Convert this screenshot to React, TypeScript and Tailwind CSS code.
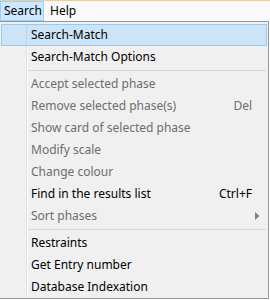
import { ReactNode } from "react";

interface MenuEntry {
    label: string;
    shortcut?: string;
    disabled?: boolean;
    submenu?: boolean;
    active?: boolean;
}

const topGroup: MenuEntry[] = [
    { label: "Search-Match", active: true },
    { label: "Search-Match Options" },
];

const middleGroup: MenuEntry[] = [
    { label: "Accept selected phase", disabled: true },
    { label: "Remove selected phase(s)", shortcut: "Del", disabled: true },
    { label: "Show card of selected phase", disabled: true },
    { label: "Modify scale", disabled: true },
    { label: "Change colour", disabled: true },
    { label: "Find in the results list", shortcut: "Ctrl+F" },
    { label: "Sort phases", disabled: true, submenu: true },
];

const bottomGroup: MenuEntry[] = [
    { label: "Restraints" },
    { label: "Get Entry number" },
    { label: "Database Indexation" },
];

function MenuRow({ entry }: { entry: MenuEntry }) {
    const base = "mx-[1px] h-[22px] flex items-center pl-[29px] pr-[14px] border";
    const look = entry.active
        ? "border-[#99c9f2] bg-[linear-gradient(to_right,#cde4f7_24px,#b8d4ec_24px,#b8d4ec_25px,#cde4f7_25px)]"
        : "border-transparent";
    return (
        <div className={`${base} ${look}`}>
            <span className={`flex-1 whitespace-nowrap ${entry.disabled ? "text-[#6d6d6d]" : "text-black"}`}>
                {entry.label}
            </span>
            {entry.shortcut && (
                <span className={entry.disabled ? "text-[#6d6d6d]" : "text-black"}>{entry.shortcut}</span>
            )}
            {entry.submenu && (
                <svg width="5" height="8" viewBox="0 0 5 8" className="-mr-[8px] ml-auto">
                    <path d="M0 0 L4.5 4 L0 8 Z" fill="#858585" />
                </svg>
            )}
        </div>
    );
}

function Separator() {
    return <div className="h-[5px] pt-[2px] ml-[28px] mr-[2px]"><div className="border-t border-[#d7d7d7]" /></div>;
}

function Group({ items }: { items: MenuEntry[] }): ReactNode {
    return items.map((item) => <MenuRow key={item.label} entry={item} />);
}

export default function App() {
    return (
        <div
            className="w-[270px] h-[300px] overflow-hidden bg-white text-[12px] leading-none"
            style={{ fontFamily: '"Noto Sans", "Open Sans", sans-serif' }}
        >
            {/* menu bar */}
            <div className="border-t border-[#f2cd85] h-[21px] bg-[#f9f9f9] flex">
                <div className="w-[44px] h-[20px] border border-[#99d1ff] bg-[#cce8ff] flex items-center pl-[3px] text-black">
                    Search
                </div>
                <div className="h-[20px] flex items-center pl-[6px] text-black">Help</div>
            </div>

            {/* dropdown */}
            <div className="-ml-[1px] w-[270px] border border-[#979797] bg-[#f0f0f0] bg-[linear-gradient(to_right,#f0f0f0_26px,#e2e2e2_26px,#e2e2e2_27px,#fbfbfb_27px,#fbfbfb_28px,#f0f0f0_28px)] pt-[2px]">
                <Group items={topGroup} />
                <Separator />
                <Group items={middleGroup} />
                <Separator />
                <Group items={bottomGroup} />
            </div>
        </div>
    );
}
